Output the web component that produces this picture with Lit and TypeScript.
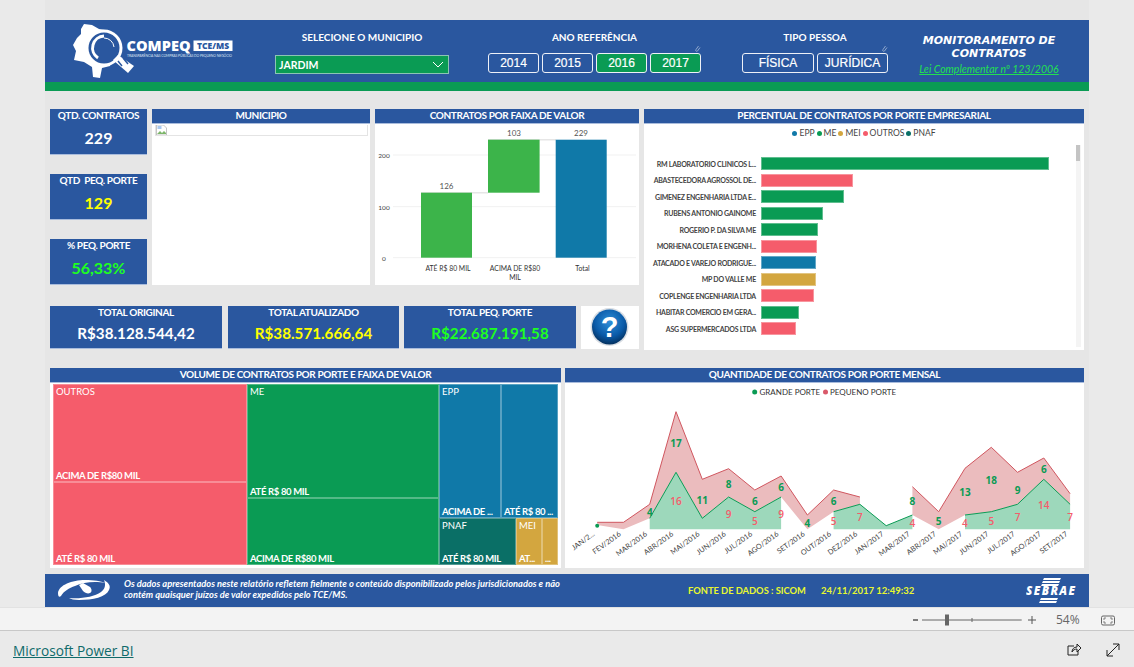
import { LitElement, css, html, svg } from "lit";
import { customElement } from "lit/decorators.js";

const YEARS = [
    { label: "2014", on: false },
    { label: "2015", on: false },
    { label: "2016", on: true },
    { label: "2017", on: true },
];

const KPIS = [
    { title: "QTD. CONTRATOS", value: "229", tone: "white" },
    { title: "QTD  PEQ. PORTE", value: "129", tone: "yellow" },
    { title: "% PEQ. PORTE", value: "56,33%", tone: "lime" },
];

const TOTALS = [
    { title: "TOTAL ORIGINAL", value: "R$38.128.544,42", tone: "white", w: 172 },
    { title: "TOTAL ATUALIZADO", value: "R$38.571.666,64", tone: "yellow", w: 171 },
    { title: "TOTAL PEQ. PORTE", value: "R$22.687.191,58", tone: "lime", w: 172 },
];

const EPP = "#1079a8";
const ME = "#0a9b54";
const MEI = "#d3a63f";
const OUTROS = "#f55c6b";
const PNAF = "#0a6f66";

const BARS = [
    { name: "RM LABORATORIO CLINICOS L...", w: 288, c: ME },
    { name: "ABASTECEDORA AGROSSOL DE...", w: 92, c: OUTROS },
    { name: "GIMENEZ ENGENHARIA LTDA E...", w: 83.3, c: ME },
    { name: "RUBENS ANTONIO GAINOME", w: 61.7, c: ME },
    { name: "ROGERIO P. DA SILVA ME", w: 57.3, c: ME },
    { name: "MORHENA COLETA E ENGENH...", w: 56, c: OUTROS },
    { name: "ATACADO E VAREJO RODRIGUE...", w: 55, c: EPP },
    { name: "MP DO VALLE ME", w: 54.7, c: MEI },
    { name: "COPLENGE ENGENHARIA LTDA", w: 53, c: OUTROS },
    { name: "HABITAR COMERCIO EM GERA...", w: 38, c: ME },
    { name: "ASG SUPERMERCADOS LTDA", w: 34.7, c: OUTROS },
];

const LEGEND = [
    { name: "EPP", c: EPP },
    { name: "ME", c: ME },
    { name: "MEI", c: MEI },
    { name: "OUTROS", c: OUTROS },
    { name: "PNAF", c: PNAF },
];

const MONTHS = [
    "JAN/2...", "FEV/2016", "MAR/2016", "ABR/2016", "MAI/2016", "JUN/2016", "JUL/2016", "AGO/2016", "SET/2016", "OUT/2016",
    "DEZ/2016", "JAN/2017", "MAR/2017", "ABR/2017", "MAI/2017", "JUN/2017", "JUL/2017", "AGO/2017", "SET/2017",
];

const BASE = 529.3;
const px = (i: number) => 597.2 + i * 26.27;
const pts = (list: [number, number][]) => list.map(([i, y]) => `${px(i).toFixed(1)},${y}`).join(" ");

// red band: top edge, then lower edge walked backwards
const BAND_A: [number, number][] = [
    [0, 522.3], [1, 522.3], [2, 504.3], [3, 411.7], [4, 479.3], [5, 468.7], [6, 490], [7, 476], [8, 515], [9, 490], [10, 497],
    [10, 504.3], [9, 511.7], [8, 529.3], [7, 497], [6, 511.7], [5, 497], [4, 518.3], [3, 472.3], [2, 518.3], [1, 529.3], [0, 525],
];
const BAND_B: [number, number][] = [
    [12, 486.7], [13, 511.7], [14, 468.3], [15, 447.3], [16, 472.3], [17, 458], [18, 493.7],
    [18, 504.3], [17, 479.3], [16, 504.3], [15, 511.7], [14, 515], [13, 529.3], [12, 515],
];
const RED_A = BAND_A.slice(0, 11);
const RED_B = BAND_B.slice(0, 7);
const GREEN_SEGS: [number, number][][] = [
    [[2, 518.3], [3, 472.3], [4, 518.3], [5, 497], [6, 511.7], [7, 497]],
    [[9, 511.7], [10, 504.3], [11, 525.7], [12, 515]],
    [[14, 515], [15, 511.7], [16, 504.3], [17, 479.3], [18, 504.3]],
];

const DATA_LABELS: [number, number, string, boolean][] = [
    [3, 447, "17", true], [3, 505, "16", false], [2, 516, "4", true], [4, 504, "11", true],
    [5, 488, "8", true], [5, 518, "9", false], [6, 505, "6", true], [6, 525, "5", false],
    [7, 491, "6", true], [7, 518, "9", false], [8, 527, "4", true], [9, 505, "6", true],
    [9, 525, "5", false], [10, 521, "7", false], [12, 505, "8", true], [12, 527, "4", false],
    [13, 525, "5", true], [14, 496, "13", true], [14, 527, "4", false], [15, 484, "18", true],
    [15, 525, "5", false], [16, 493.5, "9", true], [16, 521, "7", false], [17, 473, "6", true],
    [17, 509, "14", false], [18, 521, "7", false],
];

@customElement("app-root")
export class AppRoot extends LitElement {
    static styles = css`
        :host {
            display: block;
            width: 1134px;
            height: 667px;
            background: #eaeaea;
            overflow: hidden;
            font-family: "Lato", "Open Sans", sans-serif;
            color: #fff;
        }
        .stage {
            height: 607px;
            margin-left: 45px;
            width: 1044px;
            background: #e6e6e6;
            padding-top: 20px;
            box-sizing: border-box;
            display: flex;
            flex-direction: column;
        }
        .head {
            height: 71px;
            flex: none;
            box-sizing: border-box;
            background: #2a579f;
            border-bottom: 9px solid #0a9b54;
            display: flex;
            position: relative;
        }
        .logo {
            width: 230px;
            height: 62px;
            flex: none;
        }
        .group {
            display: flex;
            flex-direction: column;
            align-items: center;
            flex: none;
        }
        .group h3 {
            margin: 10px 0 0;
            height: 14px;
            font-size: 10px;
            line-height: 14px;
            font-weight: 700;
            white-space: pre;
        }
        .city {
            width: 174px;
        }
        .select {
            margin-top: 11px;
            width: 174px;
            height: 19px;
            box-sizing: border-box;
            background: #0a9b54;
            border: 1px solid #8cc4b4;
            display: flex;
            align-items: center;
            justify-content: space-between;
            padding: 0 4px 0 3px;
            font-size: 10.5px;
            font-weight: 700;
        }
        .years {
            margin-left: 39px;
            width: 213px;
        }
        .tipo {
            margin-left: 41px;
            width: 146px;
        }
        .btns {
            margin-top: 9px;
            display: flex;
            gap: 3px;
            position: relative;
        }
        .btn {
            height: 20px;
            box-sizing: border-box;
            border: 1px solid #eef1f7;
            border-radius: 3px;
            font: 12px/18px "Liberation Sans", sans-serif;
            -webkit-text-stroke: 0.2px #fff;
            text-align: center;
            background: #2a579f;
        }
        .btn.on {
            background: #0a9b54;
        }
        .pin {
            position: absolute;
            right: 0;
            top: -8px;
            width: 7px;
            height: 8px;
        }
        .title {
            margin-left: 21px;
            width: 160px;
            text-align: center;
            padding-top: 14px;
        }
        .title b {
            display: block;
            font-family: "DejaVu Sans", sans-serif;
            font-size: 11px;
            line-height: 13px;
            font-style: italic;
            font-weight: 700;
            white-space: nowrap;
        }
        .title a {
            display: block;
            margin-top: 3px;
            color: #22e050;
            font-size: 10.5px;
            line-height: 12px;
            font-style: italic;
            text-decoration: underline;
            white-space: nowrap;
        }
        .content {
            padding: 18px 5px 0;
            display: flex;
            flex-direction: column;
            flex: none;
        }
        .row2 {
            display: flex;
            gap: 5px;
            height: 241px;
        }
        .left {
            width: 589px;
            display: flex;
            flex-direction: column;
        }
        .top {
            display: flex;
            gap: 5px;
            height: 176px;
        }
        .kpis {
            width: 97px;
            display: flex;
            flex-direction: column;
            justify-content: space-between;
        }
        .kpi {
            height: 46px;
            background: #2a579f;
            border-bottom: 1px solid #a9bcdc;
            box-sizing: border-box;
            text-align: center;
        }
        .kpi span,
        .total span {
            display: block;
            font-size: 10px;
            line-height: 13px;
            font-weight: 700;
            letter-spacing: -0.35px;
            white-space: pre;
        }
        .kpi strong {
            display: block;
            margin-top: 6px;
            font-size: 16px;
            line-height: 20px;
        }
        .white {
            color: #fff;
        }
        .yellow {
            color: #ffff00;
        }
        .lime {
            color: #1eff1e;
        }
        .panel {
            background: #fff;
            display: flex;
            flex-direction: column;
            box-sizing: border-box;
            position: relative;
        }
        .ptitle {
            height: 15px;
            flex: none;
            box-sizing: border-box;
            background: #2a579f;
            border-bottom: 1px solid #a9bcdc;
            text-align: center;
            font-size: 10px;
            line-height: 13px;
            font-weight: 700;
            letter-spacing: -0.36px;
        }
        .muni {
            width: 218px;
        }
        .broken {
            margin: 1px 2px 0 3px;
            height: 10px;
            border: 1px solid #e4e4e4;
            border-top: none;
            overflow: hidden;
        }
        .broken svg {
            display: block;
        }
        .fall {
            width: 264px;
        }
        .fall svg,
        .trend svg {
            display: block;
        }
        .bottom {
            margin-top: 21px;
            height: 43px;
            display: flex;
        }
        .total {
            height: 43px;
            box-sizing: border-box;
            background: #2a579f;
            border-bottom: 1px solid #a9bcdc;
            text-align: center;
            flex: none;
        }
        .total strong {
            display: block;
            margin-top: 4px;
            font-size: 15.2px;
            line-height: 20px;
        }
        .total + .total {
            margin-left: 5px;
        }
        .total:nth-child(2) {
            margin-left: 6px;
        }
        .help {
            margin-left: 5px;
            width: 58px;
            height: 43px;
            background: #fff;
        }
        .bars {
            width: 440px;
        }
        .legend {
            height: 16px;
            margin-top: 1px;
            display: flex;
            justify-content: center;
            align-items: center;
            gap: 2px;
            color: #444;
            font-size: 8.5px;
        }
        .legend i {
            display: inline-block;
            width: 5px;
            height: 5px;
            border-radius: 50%;
            margin-right: 2px;
        }
        .rows {
            margin-top: 16px;
            display: flex;
            flex-direction: column;
            gap: 3.5px;
        }
        .rowb {
            display: flex;
            align-items: center;
            height: 13px;
        }
        .rowb label {
            width: 117px;
            flex: none;
            text-align: right;
            padding-right: 5px;
            box-sizing: border-box;
            font-size: 7px;
            font-weight: 700;
            letter-spacing: -0.25px;
            color: #444;
            white-space: nowrap;
        }
        .rowb div {
            height: 13px;
            box-sizing: border-box;
            border: 1px solid rgba(255, 255, 255, 0.35);
        }
        .scroll {
            position: absolute;
            right: 3px;
            top: 36px;
            width: 5px;
            height: 202px;
            background: #f4f4f4;
        }
        .scroll i {
            display: block;
            width: 4px;
            height: 16px;
            background: #c4c4c4;
        }
        .row3 {
            margin-top: 18px;
            display: flex;
            gap: 4px;
            height: 200px;
        }
        .vol {
            width: 511px;
        }
        .map {
            margin: 1px 3px 0;
            height: 181px;
            display: flex;
        }
        .mapcol {
            display: flex;
            flex-direction: column;
            flex: none;
        }
        .maprow {
            display: flex;
            flex: none;
        }
        .cell {
            box-sizing: border-box;
            border: 0.5px solid rgba(255, 255, 255, 0.3);
            padding: 1px 2px 0 2px;
            display: flex;
            flex-direction: column;
            justify-content: space-between;
            font-size: 9.5px;
            line-height: 12px;
            white-space: nowrap;
            overflow: hidden;
            flex: none;
        }
        .cell b {
            font-weight: 700;
            letter-spacing: -0.35px;
            margin-bottom: -1px;
        }
        .trend {
            width: 519px;
        }
        .foot {
            margin-top: 6px;
            height: 33px;
            background: #2a579f;
            display: flex;
            align-items: center;
            flex: none;
        }
        .eye {
            width: 79px;
            height: 33px;
            flex: none;
        }
        .note {
            width: 440px;
            flex: none;
            font-size: 9.3px;
            line-height: 11px;
            font-style: italic;
            font-weight: 700;
            margin-top: -3px;
        }
        .source {
            margin-left: 124px;
            width: 133px;
            flex: none;
            color: #e8f82f;
            font-size: 9.3px;
            font-weight: 700;
            white-space: nowrap;
            margin-top: -1px;
        }
        .stamp {
            width: 100px;
            flex: none;
            color: #e8f82f;
            font-size: 9.5px;
            font-weight: 700;
            white-space: nowrap;
            margin-top: -1px;
        }
        .sebrae {
            margin-left: 105px;
            width: 50px;
            height: 33px;
            flex: none;
        }
        .tools {
            height: 24px;
            box-sizing: border-box;
            background: #f3f3f3;
            border-top: 1px solid #e2e2e2;
            border-bottom: 1px solid #c8c8c8;
        }
        .tools svg {
            display: block;
        }
        .brand {
            height: 36px;
            display: flex;
            align-items: center;
            padding: 2px 14px 0 13px;
            box-sizing: border-box;
            color: #0f6a6a;
            font-family: "Open Sans", sans-serif;
            font-size: 13.7px;
        }
        .brand a {
            text-decoration: underline;
            flex: 1;
        }
    `;

    private _logo() {
        return html`<svg class="logo" viewBox="45 20 230 62">
            <polygon fill="#fff" points="84,24 92,25 99,29 110,31 118,40 110,66 102,68 100,78 93,77 92,67 84,62 74,60 76,51 73,45 77,38 81,34 81,29" />
            <circle cx="104" cy="48" r="18.5" fill="#fff" />
            <circle cx="104" cy="48" r="15.5" fill="#2a579f" />
            <path d="M104 36a12 12 0 0 0-6 22" fill="none" stroke="#fff" stroke-width="3" />
            <path d="M104 38a10 10 0 0 1 10 9" fill="none" stroke="#fff" stroke-width="1" />
            <path d="M113 60l5-5 16 11-6 7z" fill="#fff" />
            <path d="M118 61l4 5M123 58l5 6" stroke="#2a579f" stroke-width="1.5" />
            <text x="126.5" y="51.2" font-size="14" font-weight="800" font-family="Open Sans" fill="#fff" textLength="64" lengthAdjust="spacingAndGlyphs">COMPEQ</text>
            <rect x="193.5" y="40.5" width="39" height="10.5" fill="#fff" />
            <text x="213" y="49" font-size="8.5" font-weight="800" font-family="Open Sans" fill="#2a579f" text-anchor="middle">TCE/MS</text>
            <text x="127" y="56.5" font-size="3.4" fill="#dbe4f2" textLength="105">TRANSPARÊNCIA NAS COMPRAS PÚBLICAS DO PEQUENO NEGÓCIO</text>
        </svg>`;
    }

    private _waterfall() {
        const grid = [155, 206.7, 257.7];
        return html`<svg width="264" height="161" viewBox="375 124 264 161">
            ${grid.map((y) => svg`<line x1="393" x2="636" y1=${y} y2=${y} stroke="#f1f1f1" />`)}
            <text x="384" y="158" font-size="6.5" fill="#444" text-anchor="middle">200</text>
            <text x="384" y="209.5" font-size="6.5" fill="#444" text-anchor="middle">100</text>
            <text x="384" y="260.5" font-size="6.5" fill="#444" text-anchor="middle">0</text>
            <rect x="421" y="192" width="67" height="1.5" fill="#e6e6e6" />
            <rect x="488" y="139" width="68" height="1.5" fill="#e6e6e6" />
            <rect x="421" y="192.7" width="51" height="65" fill="#3cb44a" />
            <rect x="488" y="139.7" width="51.6" height="53" fill="#3cb44a" />
            <rect x="555.7" y="139.7" width="51" height="118" fill="#1079a8" />
            <text x="446.5" y="189" font-size="8" fill="#555" text-anchor="middle">126</text>
            <text x="514" y="136" font-size="8" fill="#555" text-anchor="middle">103</text>
            <text x="581" y="136" font-size="8" fill="#555" text-anchor="middle">229</text>
            <text x="448" y="270.5" font-size="6.8" fill="#333" text-anchor="middle">ATÉ R$ 80 MIL</text>
            <text x="515" y="270.5" font-size="6.8" fill="#333" text-anchor="middle">ACIMA DE R$80</text>
            <text x="515" y="280" font-size="6.8" fill="#333" text-anchor="middle">MIL</text>
            <text x="582.5" y="270.5" font-size="6.8" fill="#333" text-anchor="middle">Total</text>
        </svg>`;
    }

    private _trend() {
        return html`<svg width="519" height="185" viewBox="565 383 519 185">
            <circle cx="754.7" cy="392" r="2.5" fill="#0a9b54" />
            <text x="759.5" y="395" font-size="8" fill="#333">GRANDE PORTE</text>
            <circle cx="825.5" cy="392" r="2.5" fill="#d9596a" />
            <text x="830" y="395" font-size="8" fill="#333">PEQUENO PORTE</text>
            <polygon points=${pts(BAND_A)} fill="#ebbcbe" />
            <polygon points=${pts(BAND_B)} fill="#ebbcbe" />
            ${GREEN_SEGS.map((seg) => {
                const first = seg[0][0];
                const last = seg[seg.length - 1][0];
                const area = [...seg, [last, BASE], [first, BASE]] as [number, number][];
                return svg`<polygon points=${pts(area)} fill="#9dd8bb" />
                    <polyline points=${pts(seg)} fill="none" stroke="#0a9b54" stroke-width="1" />`;
            })}
            <polyline points=${pts(RED_A)} fill="none" stroke="#d0565f" stroke-width="1" />
            <polyline points=${pts(RED_B)} fill="none" stroke="#d0565f" stroke-width="1" />
            <circle cx=${px(0)} cy="525.7" r="2" fill="#0a9b54" />
            ${DATA_LABELS.map(
                ([i, y, t, green]) => svg`<text x=${px(i)} y=${y} font-size="10" font-family="Open Sans" font-weight=${green ? 700 : 600} fill=${green ? "#0a9b54" : OUTROS} text-anchor="middle">${t}</text>`,
            )}
            ${MONTHS.map(
                (m, i) => svg`<text transform=${`translate(${px(i) - 2} 535) rotate(-36)`} font-size="7.3" fill="#444" text-anchor="end">${m}</text>`,
            )}
        </svg>`;
    }

    private _cell(name: string, label: string, color: string, w: number, h: number) {
        return html`<div class="cell" style="background:${color};width:${w}px;height:${h}px">
            <span>${name}</span><b>${label}</b>
        </div>`;
    }

    render() {
        return html`
            <div class="stage">
                <div class="head">
                    ${this._logo()}
                    <div class="group city">
                        <h3>SELECIONE O MUNICIPIO</h3>
                        <div class="select">
                            JARDIM
                            <svg width="12" height="7" viewBox="0 0 12 7"><path d="M1 1l5 5 5-5" fill="none" stroke="#fff" stroke-width="1" /></svg>
                        </div>
                    </div>
                    <div class="group years">
                        <h3>ANO REFERÊNCIA</h3>
                        <div class="btns">
                            ${YEARS.map((y) => html`<div class="btn ${y.on ? "on" : ""}" style="width:51px">${y.label}</div>`)}
                            <svg class="pin" viewBox="0 0 7 8"><path d="M4.5 1L2 4.5a1 1 0 0 0 1.5 1.5L6 2.5" fill="none" stroke="#8ea6cc" stroke-width="1" /></svg>
                        </div>
                    </div>
                    <div class="group tipo">
                        <h3>TIPO PESSOA</h3>
                        <div class="btns">
                            <div class="btn" style="width:72px">FÍSICA</div>
                            <div class="btn" style="width:71px">JURÍDICA</div>
                            <svg class="pin" viewBox="0 0 7 8"><path d="M4.5 1L2 4.5a1 1 0 0 0 1.5 1.5L6 2.5" fill="none" stroke="#8ea6cc" stroke-width="1" /></svg>
                        </div>
                    </div>
                    <div class="title">
                        <b>MONITORAMENTO DE</b>
                        <b>CONTRATOS</b>
                        <a>Lei Complementar nº 123/2006</a>
                    </div>
                </div>

                <div class="content">
                    <div class="row2">
                        <div class="left">
                            <div class="top">
                                <div class="kpis">
                                    ${KPIS.map(
                                        (k) => html`<div class="kpi"><span>${k.title}</span><strong class=${k.tone}>${k.value}</strong></div>`,
                                    )}
                                </div>
                                <div class="panel muni">
                                    <div class="ptitle">MUNICIPIO</div>
                                    <div class="broken">
                                        <svg width="11" height="10" viewBox="0 0 11 10">
                                            <path d="M0.5 0h7l3 3v7H0.5z" fill="#fff" stroke="#b5b5b5" stroke-width="0.8" />
                                            <path d="M1 9l3-3 2 2 2-2 2 2v1H1z" fill="#7db66a" />
                                            <rect x="1.5" y="1" width="4" height="3" fill="#a9c9ef" />
                                        </svg>
                                    </div>
                                </div>
                                <div class="panel fall">
                                    <div class="ptitle">CONTRATOS POR FAIXA DE VALOR</div>
                                    ${this._waterfall()}
                                </div>
                            </div>
                            <div class="bottom">
                                ${TOTALS.map(
                                    (t) => html`<div class="total" style="width:${t.w}px"><span>${t.title}</span><strong class=${t.tone}>${t.value}</strong></div>`,
                                )}
                                <div class="help">
                                    <svg width="58" height="43" viewBox="0 0 58 43">
                                        <defs>
                                            <radialGradient id="gl" cx="0.5" cy="0.35" r="0.7">
                                                <stop offset="0" stop-color="#2f8fd8" />
                                                <stop offset="0.6" stop-color="#0a5aa8" />
                                                <stop offset="1" stop-color="#03284f" />
                                            </radialGradient>
                                        </defs>
                                        <circle cx="28.5" cy="21" r="19" fill="#d8dde3" />
                                        <circle cx="28.5" cy="21" r="17.5" fill="url(#gl)" />
                                        <text x="28.5" y="31" font-size="29" font-weight="800" fill="#fff" text-anchor="middle" font-family="Liberation Sans">?</text>
                                    </svg>
                                </div>
                            </div>
                        </div>
                        <div class="panel bars">
                            <div class="ptitle">PERCENTUAL DE CONTRATOS POR PORTE EMPRESARIAL</div>
                            <div class="legend">
                                ${LEGEND.map((l) => html`<span><i style="background:${l.c}"></i>${l.name}</span>`)}
                            </div>
                            <div class="rows">
                                ${BARS.map(
                                    (b) => html`<div class="rowb"><label>${b.name}</label><div style="width:${b.w}px;background:${b.c}"></div></div>`,
                                )}
                            </div>
                            <div class="scroll"><i></i></div>
                        </div>
                    </div>
                    <div class="row3">
                        <div class="panel vol">
                            <div class="ptitle">VOLUME DE CONTRATOS POR PORTE E FAIXA DE VALOR</div>
                            <div class="map">
                                <div class="mapcol">
                                    ${this._cell("OUTROS", "ACIMA DE R$80 MIL", OUTROS, 194, 98)}
                                    ${this._cell("", "ATÉ R$ 80 MIL", OUTROS, 194, 83)}
                                </div>
                                <div class="mapcol">
                                    ${this._cell("ME", "ATÉ R$ 80 MIL", ME, 192, 114)}
                                    ${this._cell("", "ACIMA DE R$80 MIL", ME, 192, 67)}
                                </div>
                                <div class="mapcol">
                                    <div class="maprow">
                                        ${this._cell("EPP", "ACIMA DE ...", EPP, 62, 134)}
                                        ${this._cell("", "ATÉ R$ 80 ...", EPP, 57, 134)}
                                    </div>
                                    <div class="maprow">
                                        ${this._cell("PNAF", "ATÉ R$ 80 MIL", PNAF, 77, 47)}
                                        ${this._cell("MEI", "AT...", MEI, 26, 47)}
                                        ${this._cell("", "...", MEI, 16, 47)}
                                    </div>
                                </div>
                            </div>
                        </div>
                        <div class="panel trend">
                            <div class="ptitle">QUANTIDADE DE CONTRATOS POR PORTE MENSAL</div>
                            ${this._trend()}
                        </div>
                    </div>
                </div>

                <div class="foot">
                    <svg class="eye" viewBox="45 574 79 33">
                        <path d="M58 593c1-8 14-13 27-13 9 0 16 1 20 3-9-2-22-1-30 3-6 2-11 5-14 10-2 2-3 0-3-3z" fill="#fff" />
                        <path d="M104 580c5 3 7 6 5 10-3 7-16 10-30 10-5 0-8-1-10-2 12 1 25-1 32-6 4-3 5-7 3-12z" fill="#fff" />
                        <path d="M79 585l4-2 7 4c2 2 2 5 0 6-2 1-5 0-7-2z" fill="#fff" />
                    </svg>
                    <div class="note">Os dados apresentados neste relatório refletem fielmente o conteúdo disponibilizado pelos jurisdicionados e não contém quaisquer juízos de valor expedidos pelo TCE/MS.</div>
                    <div class="source">FONTE DE DADOS : SICOM</div>
                    <div class="stamp">24/11/2017 12:49:32</div>
                    <svg class="sebrae" viewBox="0 0 50 33">
                        <path d="M18 4h17l-1 2H17zM17 7h17l-1 2H16zM16 10h17l-1 2H15zM15 24h17l-1 2H14zM14 27h17l-1 2H13z" fill="#fff" />
                        <text x="0" y="21" font-size="11.5" font-weight="800" font-family="Open Sans" font-style="italic" fill="#fff" textLength="49">SEBRAE</text>
                    </svg>
                </div>
            </div>
            <div class="tools">
                <svg width="1134" height="22" viewBox="0 607 1134 22">
                    <line x1="913" x2="918" y1="619" y2="619" stroke="#555" stroke-width="1.5" />
                    <line x1="922" x2="1021.7" y1="619" y2="619" stroke="#666" />
                    <rect x="945" y="613.5" width="4" height="11" fill="#666" />
                    <line x1="972" x2="972" y1="617" y2="621" stroke="#666" />
                    <path d="M1028 619h8M1032 615v8" stroke="#555" fill="none" />
                    <text x="1056" y="623" font-size="12" fill="#666" font-family="Open Sans">54%</text>
                    <rect x="1101.5" y="615" width="13" height="9" rx="1.5" fill="none" stroke="#666" />
                    <path d="M1104 619v-2h2M1112 619v-2h-2M1104 620v2h2M1112 620v2h-2" stroke="#666" fill="none" stroke-width="0.8" />
                </svg>
            </div>
            <div class="brand">
                <a>Microsoft Power BI</a>
                <svg width="54" height="16" viewBox="0 0 54 16">
                    <path d="M8 4H2v9h10V9" fill="none" stroke="#222" />
                    <path d="M6 10c0-3 2-5 5-5V2l4 4-4 4V7c-2 0-4 1-5 3z" fill="none" stroke="#222" />
                    <path d="M41 14L53 2M47 2h6v6M41 8v6h6" fill="none" stroke="#222" />
                </svg>
            </div>
        `;
    }
}
